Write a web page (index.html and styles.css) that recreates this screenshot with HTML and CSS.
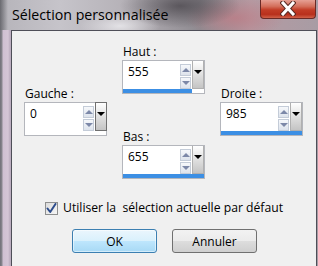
FILE: index.html
```html
<!DOCTYPE html>
<html lang="fr">
<head>
<meta charset="utf-8">
<title>Sélection personnalisée</title>
<link rel="stylesheet" href="styles.css">
</head>
<body>
<div class="window">
  <div class="titlebar">
    <div class="title">Sélection personnalisée</div>
    <div class="close">
      <svg width="16" height="15" viewBox="0 0 16 15">
        <path d="M3 2 L13 13 M13 2 L3 13" stroke="#5a2a22" stroke-width="5" stroke-linecap="square" fill="none"/>
        <path d="M3 2 L13 13 M13 2 L3 13" stroke="#ffffff" stroke-width="3" stroke-linecap="square" fill="none"/>
      </svg>
    </div>
  </div>
  <div class="frame">
    <div class="side"></div>
    <div class="client">
      <div class="fields">
        <div class="col col-side">
          <div class="group">
            <div class="lbl">Gauche :</div>
            <div class="spin">
              <div class="row">
                <div class="val">0</div>
                <div class="arrows">
                  <div class="arr up"><span></span></div>
                  <div class="arr down"><span></span></div>
                </div>
                <div class="drop focus"><span></span></div>
              </div>
              <div class="bar"><div class="fill" style="width:0%"></div></div>
            </div>
          </div>
        </div>
        <div class="col">
          <div class="group">
            <div class="lbl">Haut :</div>
            <div class="spin">
              <div class="row">
                <div class="val">555</div>
                <div class="arrows">
                  <div class="arr up"><span></span></div>
                  <div class="arr down"><span></span></div>
                </div>
                <div class="drop"><span></span></div>
              </div>
              <div class="bar"><div class="fill" style="width:85%"></div></div>
            </div>
          </div>
          <div class="group group-bas">
            <div class="lbl">Bas :</div>
            <div class="spin">
              <div class="row">
                <div class="val">655</div>
                <div class="arrows">
                  <div class="arr up"><span></span></div>
                  <div class="arr down"><span></span></div>
                </div>
                <div class="drop"><span></span></div>
              </div>
              <div class="bar"><div class="fill" style="width:100%"></div></div>
            </div>
          </div>
        </div>
        <div class="col col-side">
          <div class="group">
            <div class="lbl">Droite :</div>
            <div class="spin">
              <div class="row">
                <div class="val">985</div>
                <div class="arrows">
                  <div class="arr up"><span></span></div>
                  <div class="arr down"><span></span></div>
                </div>
                <div class="drop"><span></span></div>
              </div>
              <div class="bar"><div class="fill" style="width:100%"></div></div>
            </div>
          </div>
        </div>
      </div>
      <label class="check">
        <span class="box">
          <svg width="11" height="11" viewBox="0 0 11 11">
            <path d="M1.5 5.5 L4.2 9 L9.5 1" stroke="#2c4c8c" stroke-width="2" fill="none" stroke-linecap="round" stroke-linejoin="round"/>
          </svg>
        </span>
        <span class="ctext">Utiliser la&nbsp; sélection actuelle par défaut</span>
      </label>
      <div class="buttons">
        <div class="btn ok">OK</div>
        <div class="btn">Annuler</div>
      </div>
    </div>
  </div>
</div>
</body>
</html>
```

FILE: styles.css
```css
html, body {
  margin: 0;
  padding: 0;
}
body {
  width: 318px;
  height: 266px;
  overflow: hidden;
  font-family: "Open Sans", "Noto Sans", sans-serif;
}
.window {
  width: 318px;
  height: 266px;
  display: flex;
  flex-direction: column;
  background:
    radial-gradient(ellipse 60px 22px at 180px 6px, rgba(70,66,72,0.75), rgba(70,66,72,0) 100%),
    radial-gradient(ellipse 50px 20px at 235px 18px, rgba(190,120,130,0.7), rgba(190,120,130,0) 100%),
    radial-gradient(ellipse 40px 14px at 120px 26px, rgba(245,245,248,0.7), rgba(245,245,248,0) 100%),
    linear-gradient(90deg, #6a6a70 0px, #b8b6bc 8px, #c6c4ca 60px, #b4b0b6 130px, #8e8a90 200px, #b59aa2 250px, #a89ca4 318px);
}
.titlebar {
  height: 30px;
  display: flex;
  justify-content: space-between;
  align-items: flex-start;
  flex: none;
}
.title {
  padding: 5px 0 0 12px;
  font-size: 14.2px;
  line-height: 20px;
  color: #000;
}
.close {
  margin-right: 2px;
  width: 56px;
  height: 19px;
  border: 1px solid #6a2a26;
  border-top: none;
  border-radius: 0 0 4px 4px;
  background: linear-gradient(180deg, #e6a094 0%, #d4705c 35%, #c23c26 55%, #b8301c 80%, #d06048 100%);
  display: flex;
  align-items: flex-start;
  justify-content: center;
  padding-top: 1px;
  box-sizing: border-box;
}
.frame {
  flex: 1;
  display: flex;
  min-height: 0;
}
.side {
  width: 11px;
  flex: none;
  background: linear-gradient(90deg, #707078 0px, #8a8890 2px, #cfc0d2 3px, #d4c6d6 8px, #bcaec0 10px);
}
.client {
  flex: 1;
  margin-right: 1px;
  background: #f0f0f0;
  border-top: 1px solid #4e4e58;
  border-left: 1px solid #4e4e58;
  border-right: 1px solid #4e4e58;
  display: flex;
  flex-direction: column;
  font-size: 12px;
  color: #000;
}
.fields {
  display: flex;
  gap: 15px;
  padding: 13px 0 0 12px;
}
.col {
  width: 83px;
  display: flex;
  flex-direction: column;
}
.col-side {
  margin-top: 42px;
}
.group-bas {
  margin-top: 35px;
}
.lbl {
  line-height: 16px;
  height: 16px;
  padding-left: 1px;
}
.spin {
  height: 34px;
  box-sizing: border-box;
  border: 1px solid #b4b6bc;
  background: #fff;
  display: flex;
  flex-direction: column;
}
.row {
  flex: 1;
  display: flex;
}
.val {
  flex: 1;
  padding: 3px 0 0 5px;
  line-height: 16px;
}
.arrows {
  width: 11px;
  display: flex;
  flex-direction: column;
  gap: 1px;
  padding-top: 3px;
}
.arr {
  width: 11px;
  height: 12px;
  box-sizing: border-box;
  border: 1px solid #c4ccd8;
  background: linear-gradient(180deg, #f6f8fb, #dde3ec);
  display: flex;
  align-items: center;
  justify-content: center;
}
.arr span {
  width: 0;
  height: 0;
  border-left: 4px solid transparent;
  border-right: 4px solid transparent;
}
.up span {
  border-bottom: 4px solid #7c88a8;
}
.down span {
  border-top: 4px solid #7c88a8;
}
.drop {
  width: 12px;
  margin-left: 1px;
  box-sizing: border-box;
  border: 1px solid #b0b0b0;
  border-top: none;
  background: linear-gradient(180deg, #ffffff 0%, #e6e6e6 40%, #c4c4c4 100%);
  display: flex;
  justify-content: center;
  padding-top: 9px;
}
.drop.focus {
  border: 1px solid #707070;
  margin-top: -1px;
  margin-right: -1px;
}
.drop span {
  width: 0;
  height: 0;
  border-left: 4px solid transparent;
  border-right: 4px solid transparent;
  border-top: 4px solid #000;
}
.bar {
  height: 4px;
  flex: none;
}
.fill {
  height: 4px;
  background: #3c8fe4;
}
.check {
  display: flex;
  align-items: center;
  margin: 21px 0 0 33px;
  line-height: 16px;
}
.box {
  width: 13px;
  height: 13px;
  box-sizing: border-box;
  border: 1px solid #8e8f8f;
  background: linear-gradient(135deg, #dcdcdc, #f6f6f6);
  display: flex;
  align-items: center;
  justify-content: center;
  margin-right: 5px;
}
.ctext {
  white-space: pre;
  font-size: 12.2px;
}
.buttons {
  display: flex;
  gap: 15px;
  margin: 13px 0 0 60px;
}
.btn {
  width: 85px;
  height: 24px;
  box-sizing: border-box;
  border: 1px solid #707070;
  border-radius: 3px;
  background: linear-gradient(180deg, #f2f2f2 0%, #ebebeb 50%, #dddddd 51%, #cfcfcf 100%);
  display: flex;
  align-items: center;
  justify-content: center;
  font-size: 12px;
}
.btn.ok {
  border-color: #3c7fb1;
  background: linear-gradient(180deg, #eaf6fd 0%, #d9f0fc 50%, #bee6fd 51%, #a7d9f5 100%);
  box-shadow: inset 0 0 0 1px rgba(255,255,255,0.5);
}
```
